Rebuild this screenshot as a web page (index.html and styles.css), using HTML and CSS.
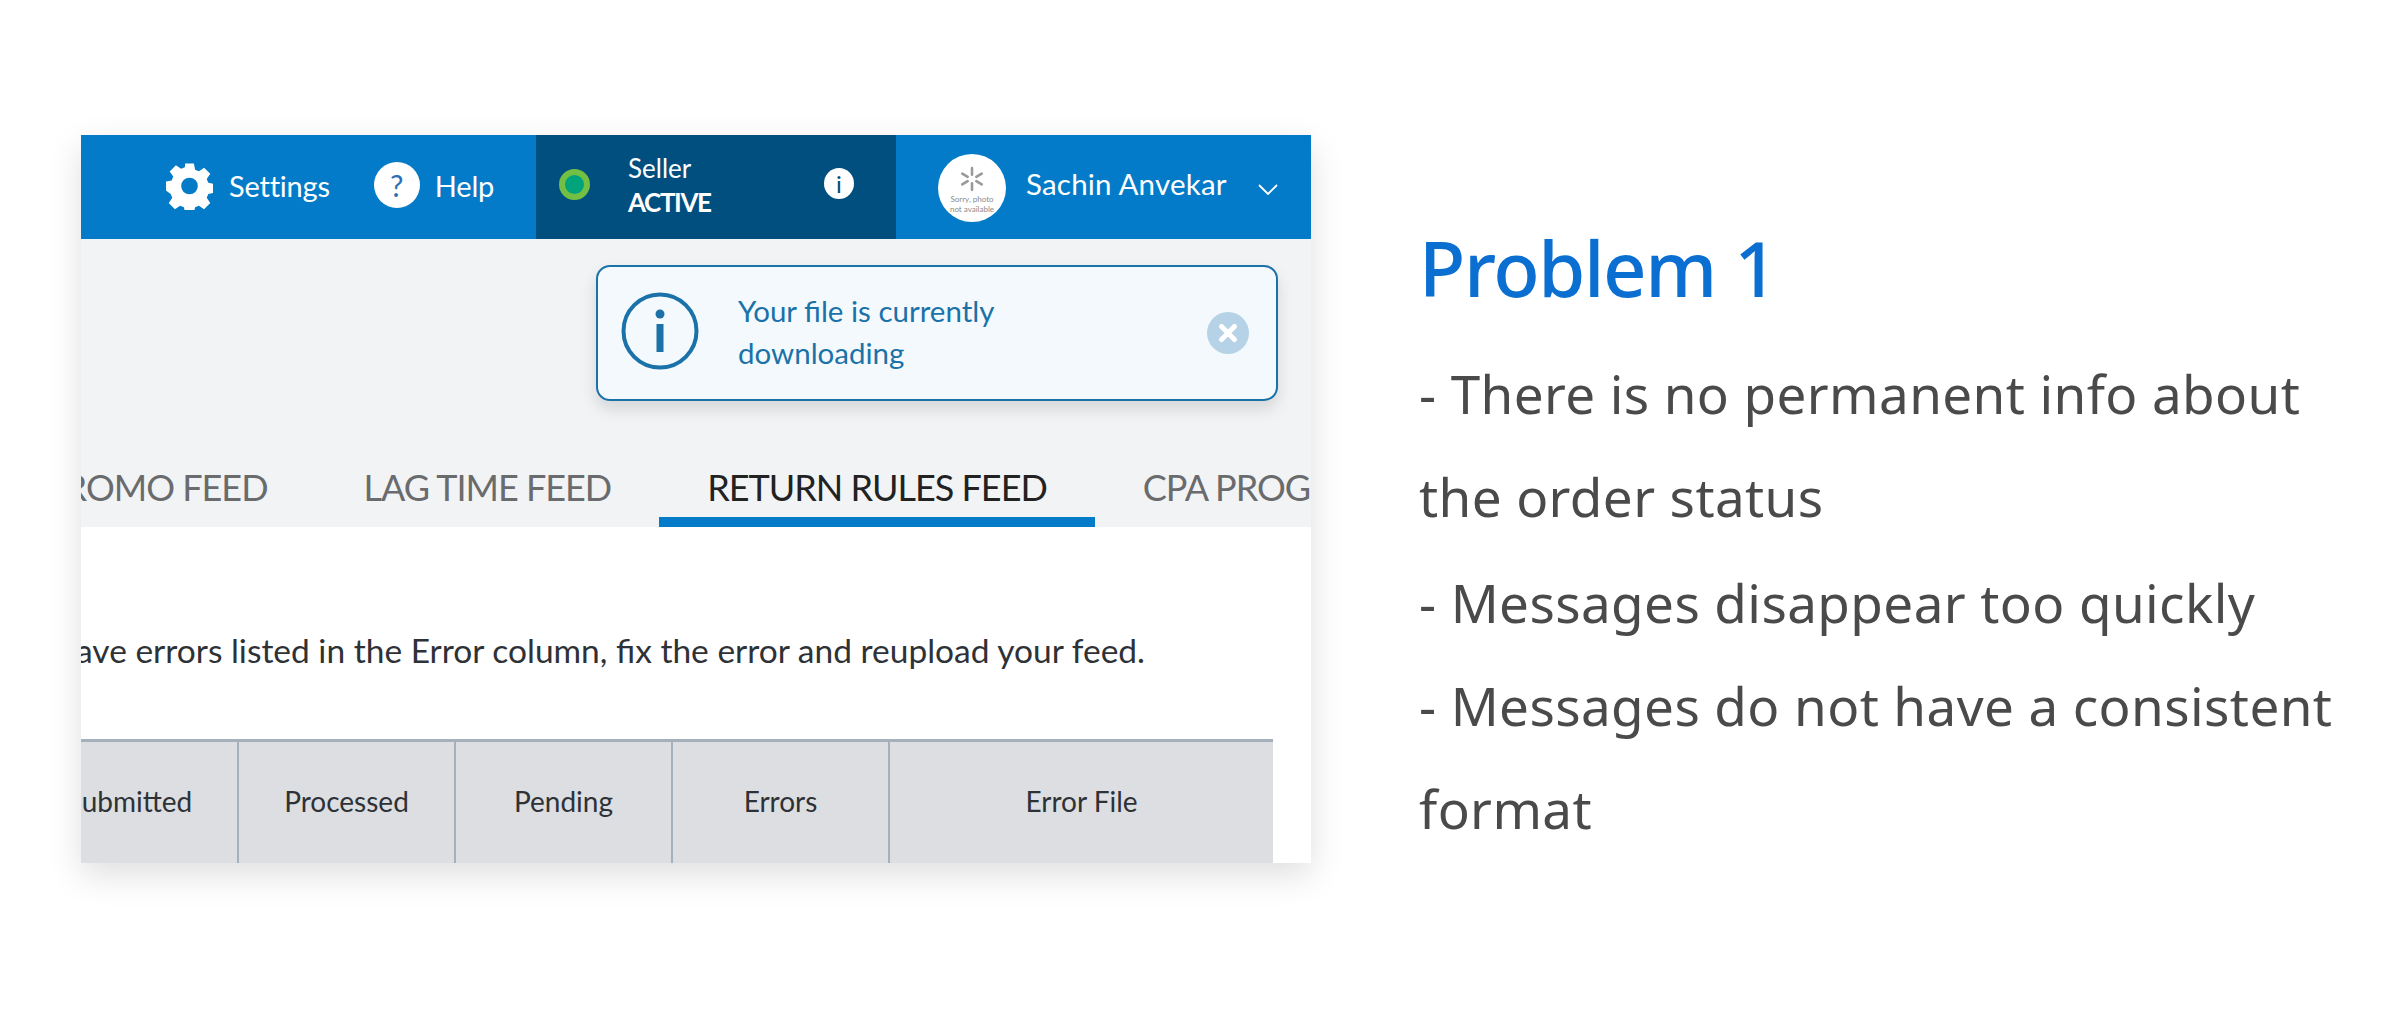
FILE: index.html
```html
<!DOCTYPE html>
<html lang="en">
<head>
  <meta charset="UTF-8">
  <title>Problem 1</title>
  <link rel="stylesheet" href="styles.css">
</head>
<body>

  <section class="shot">
    <header class="topbar">
      <nav class="topnav">
        <svg class="gear" viewBox="0 0 48 48">
          <path fill="#fff" fill-rule="evenodd" d="M19.5 1h9l1.2 6.3 3.9 1.6 5.3-3.6 6.3 6.3-3.6 5.3 1.6 3.9 5.800 1.200v9l-5.800 1.200-1.600 3.900 3.600 5.300-6.300 6.300-5.300-3.600-3.900 1.600-1.200 5.800h-9l-1.200-5.800-3.900-1.600-5.300 3.600-6.300-6.300 3.600-5.300-1.600-3.900L0 28.500v-9l5.800-1.200 1.600-3.900-3.600-5.300 6.300-6.300 5.300 3.600 3.900-1.600zM24 15.500a8.500 8.500 0 1 0 0 17 8.500 8.500 0 0 0 0-17z"/>
        </svg>
        <span class="nav-label">Settings</span>
        <span class="help-icon">?</span>
        <span class="nav-label">Help</span>
      </nav>

      <div class="status">
        <span class="status-dot"></span>
        <div class="status-text">
          <span>Seller</span>
          <strong>ACTIVE</strong>
        </div>
        <span class="status-info">i</span>
      </div>

      <div class="user">
        <div class="avatar">
          <svg class="spark" viewBox="0 0 24 24">
            <g stroke="#9a9a9a" stroke-width="2.400" stroke-linecap="round">
              <path d="M12 2v6M12 16v6M3 7l5 3M16 14l5 3M3 17l5-3M16 10l5-3"/>
            </g>
          </svg>
          <span class="avatar-text">Sorry, photo<br>not available</span>
        </div>
        <span class="user-name">Sachin Anvekar</span>
        <svg class="chevron" viewBox="0 0 20 11">
          <path d="M1 1l9 9 9-9" fill="none" stroke="#fff" stroke-width="1.800"/>
        </svg>
      </div>
    </header>

    <div class="band">
      <div class="toast">
        <svg class="toast-icon" viewBox="0 0 78 78">
          <circle cx="39" cy="39" r="36.500" fill="none" stroke="#1a72a8" stroke-width="4"/>
          <circle cx="39" cy="22" r="4.500" fill="#1a72a8"/>
          <rect x="35.500" y="32" width="7" height="28" fill="#1a72a8"/>
        </svg>
        <p class="toast-text">Your file is currently<br>downloading</p>
        <svg class="toast-close" viewBox="0 0 42 42">
          <circle cx="21" cy="21" r="21" fill="#b5d2e6"/>
          <path d="M14.500 14.500l13 13M27.500 14.500l-13 13" stroke="#fff" stroke-width="5" stroke-linecap="round"/>
        </svg>
      </div>

      <div class="tabs">
        <span class="tab">PROMO FEED</span>
        <span class="tab">LAG TIME FEED</span>
        <span class="tab tab-active">RETURN RULES FEED</span>
        <span class="tab">CPA PROGRAM</span>
      </div>
    </div>

    <div class="content">
      <p class="hint">Items that have errors listed in the Error column, fix the error and reupload your feed.</p>
      <div class="feed-table">
        <div class="cell">Submitted</div>
        <div class="cell">Processed</div>
        <div class="cell">Pending</div>
        <div class="cell">Errors</div>
        <div class="cell">Error File</div>
      </div>
    </div>
  </section>

  <aside class="notes">
    <h1>Problem 1</h1>
    <p>- There is no permanent info about the order status</p>
    <p>- Messages disappear too quickly</p>
    <p>- Messages do not have a consistent format</p>
  </aside>

</body>
</html>
```

FILE: styles.css
```css
html, body {
  margin: 0;
  padding: 0;
}

body {
  width: 2400px;
  height: 1017px;
  overflow: hidden;
  background-color: #fff;
  display: flex;
  align-items: flex-start;
}

.shot {
  flex: none;
  width: 1230px;
  height: 728px;
  margin: 135px 0 0 81px;
  overflow: hidden;
  background-color: #fff;
  box-shadow: 0 12px 32px rgba(0, 0, 0, 0.13);
  font-family: 'Lato', sans-serif;
  display: flex;
  flex-direction: column;
}

/* top bar */
.topbar {
  flex: none;
  height: 104px;
  display: flex;
  background-color: #047bc8;
  color: #fff;
}

.topnav {
  width: 455px;
  box-sizing: border-box;
  padding-left: 85px;
  display: flex;
  align-items: center;
}

.gear {
  width: 47px;
  height: 48px;
  margin-top: -2px;
}

.nav-label {
  font-size: 29px;
  letter-spacing: -0.2px;
  margin-left: 16px;
  margin-top: -4px;
}

.help-icon {
  flex: none;
  width: 46px;
  height: 46px;
  margin-left: 44px;
  margin-right: -1px;
  margin-top: -4px;
  border-radius: 50%;
  background-color: #fff;
  color: #2d6fb5;
  font-size: 30px;
  line-height: 46px;
  text-align: center;
}

.status {
  width: 360px;
  box-sizing: border-box;
  padding: 0 42px 0 23px;
  background-color: #004f7f;
  display: flex;
  align-items: center;
}

.status-dot {
  flex: none;
  width: 31px;
  height: 31px;
  box-sizing: border-box;
  margin-top: -6px;
  border: 6px solid #72bf44;
  border-radius: 50%;
  background-color: #00a37a;
}

.status-text {
  flex: 1;
  margin-left: 38px;
  margin-top: -5px;
  display: flex;
  flex-direction: column;
  font-size: 26px;
  line-height: 34px;
}

.status-text strong {
  font-weight: 700;
  letter-spacing: -1.4px;
}

.status-info {
  flex: none;
  width: 30px;
  height: 31px;
  margin-top: -8px;
  border-radius: 50%;
  background-color: #fff;
  color: #004f7f;
  font-size: 24px;
  line-height: 31px;
  text-align: center;
}

.user {
  flex: 1;
  padding-left: 42px;
  display: flex;
  align-items: center;
}

.avatar {
  flex: none;
  width: 68px;
  height: 68px;
  border-radius: 50%;
  background-color: #fff;
  color: #8a8a8a;
  text-align: center;
  margin-top: 2px;
  overflow: hidden;
}

.spark {
  display: block;
  width: 26px;
  height: 26px;
  margin: 12px auto 2px;
}

.avatar-text {
  display: block;
  font-size: 8px;
  line-height: 10px;
}

.user-name {
  margin-left: 20px;
  margin-top: -8px;
  font-size: 29.500px;
  letter-spacing: 0.2px;
}

.chevron {
  width: 20px;
  height: 11px;
  margin-left: 31px;
  margin-top: 4px;
}

/* grey band with the message and the tabs */
.band {
  flex: none;
  height: 288px;
  background-color: #f2f3f5;
  display: flex;
  flex-direction: column;
}

.toast {
  flex: none;
  align-self: flex-end;
  width: 682px;
  height: 136px;
  box-sizing: border-box;
  margin: 26px 33px 0 0;
  padding: 0 27px 0 23px;
  background-color: #f4f9fd;
  border: 2px solid #1a72a8;
  border-radius: 14px;
  box-shadow: 0 8px 16px rgba(0, 0, 0, 0.12);
  display: flex;
  align-items: center;
}

.toast-icon {
  flex: none;
  width: 78px;
  height: 78px;
  margin-top: -4px;
}

.toast-text {
  flex: 1;
  margin: -2px 0 0 39px;
  color: #1a72a8;
  font-size: 29.500px;
  line-height: 42px;
}

.toast-close {
  flex: none;
  width: 42px;
  height: 42px;
}

.tabs {
  margin-top: auto;
  margin-left: -85px;
  display: flex;
  white-space: nowrap;
}

.tab {
  flex: none;
  padding: 0 48px 6px;
  border-bottom: 10px solid transparent;
  color: #6a6b6d;
  font-size: 36px;
  letter-spacing: -1px;
  line-height: 48px;
}

.tab-active {
  color: #222;
  border-bottom-color: #047bc8;
}

/* white area below */
.content {
  flex: 1;
  display: flex;
  flex-direction: column;
  min-height: 0;
}

.hint {
  flex: none;
  height: 212px;
  margin: 0;
  padding: 34px 166px 0 0;
  box-sizing: border-box;
  display: flex;
  justify-content: flex-end;
  align-items: center;
  white-space: nowrap;
  color: #2e3236;
  font-size: 33.500px;
}

.feed-table {
  flex: 1;
  width: 1251px;
  margin-left: -59px;
  border-top: 3px solid #a6b0bc;
  background-color: #dcdee2;
  display: grid;
  grid-template-columns: 217px 217px 217px 217px 383px;
}

.cell {
  display: flex;
  align-items: center;
  justify-content: center;
  box-sizing: border-box;
  padding-bottom: 4px;
  border-right: 2px solid #a6b0bc;
  color: #2e3236;
  font-size: 28px;
}

.cell:last-child {
  border-right: none;
}

/* notes on the right */
.notes {
  flex: none;
  width: 960px;
  margin: 0 0 0 108px;
  padding-top: 216px;
  font-family: 'Noto Sans', sans-serif;
  color: #4a4a4a;
}

.notes h1 {
  margin: 0 0 22px;
  color: #0a6fd0;
  font-size: 76px;
  font-weight: 500;
  letter-spacing: -1.400px;
  line-height: 104px;
}

.notes p {
  margin: 0;
  font-size: 53px;
  letter-spacing: 0.400px;
  line-height: 103px;
}

.notes h1 + p {
  margin-bottom: 3px;
}
```
